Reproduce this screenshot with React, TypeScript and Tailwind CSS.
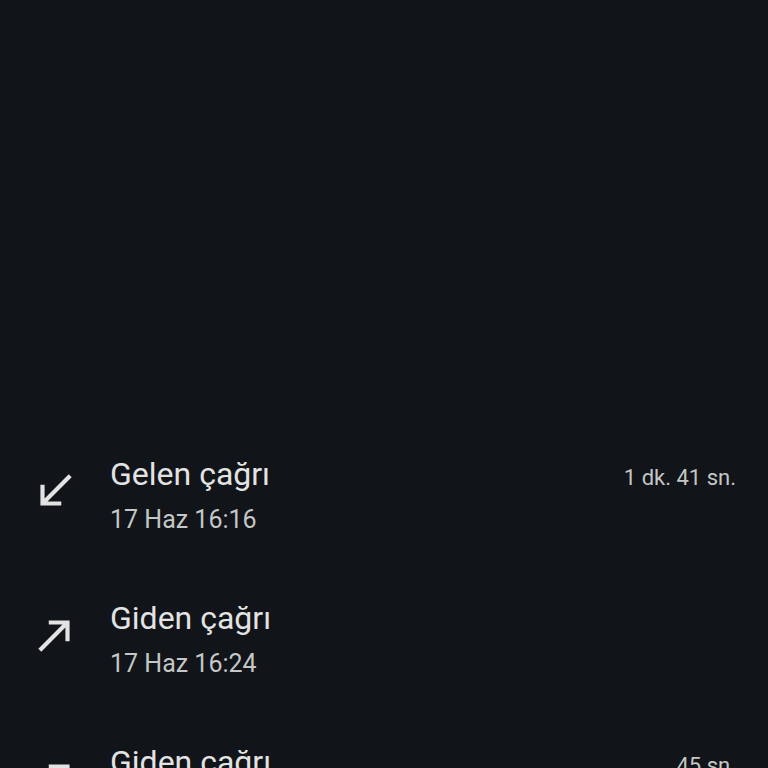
const calls = [
  { dir: 'in', label: 'Gelen çağrı', time: '17 Haz 16:16', duration: '1 dk. 41 sn.' },
  { dir: 'out', label: 'Giden çağrı', time: '17 Haz 16:24', duration: '' },
  { dir: 'out', label: 'Giden çağrı', time: '17 Haz 16:31', duration: '45 sn.' },
]

function CallIcon({ dir }: { dir: string }) {
  return (
    <svg viewBox="0 0 24 24" className="w-[50px] h-[50px] shrink-0 mt-[14px]" fill="#e3e3e3">
      {dir === 'in'
        ? <path d="M20 5.41L18.59 4 7 15.59V9H5v10h10v-2H8.41z" />
        : <path d="M9 5v2h6.59L4 18.59 5.41 20 17 8.41V15h2V5z" />}
    </svg>
  )
}

export default function App() {
  return (
    <div className="h-[768px] overflow-hidden bg-[#111418] font-['Roboto',sans-serif]">
      <div className="h-[420px]" />
      {calls.map((c, i) => (
        <div key={i} className="h-[144px] flex items-start pt-8 pl-[30px] pr-8 gap-[30px]">
          <CallIcon dir={c.dir} />
          <div className="flex-1 flex flex-col">
            <div className="flex items-baseline justify-between">
              <span className="text-[32px] leading-[44px] text-[#e3e3e3]">{c.label}</span>
              <span className="text-[22px] text-[#c4c7c5]">{c.duration}</span>
            </div>
            <span className="mt-[6px] text-[25px] leading-[36px] text-[#c4c7c5]">{c.time}</span>
          </div>
        </div>
      ))}
    </div>
  )
}
